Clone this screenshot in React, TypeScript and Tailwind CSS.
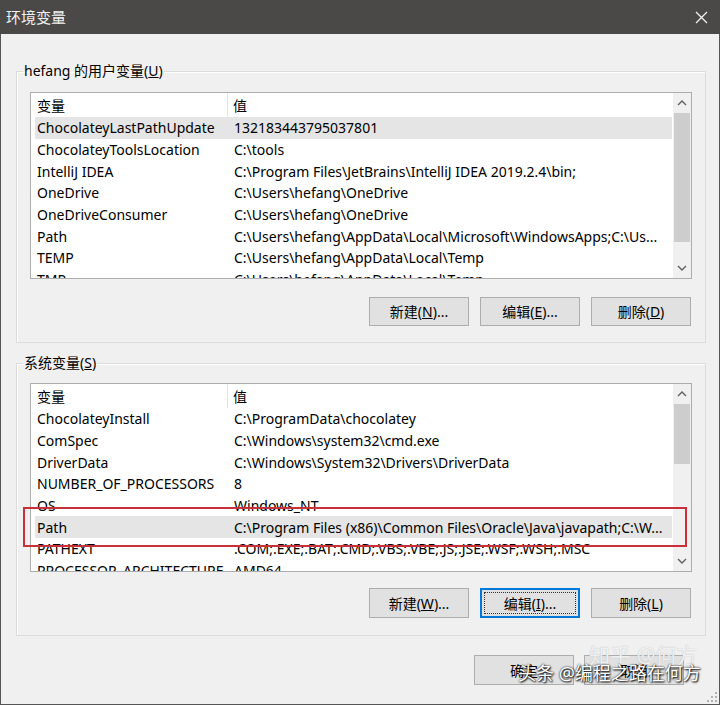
import React from 'react';

type Row = [string, string];

const userVars: Row[] = [
  ['ChocolateyLastPathUpdate', '132183443795037801'],
  ['ChocolateyToolsLocation', 'C:\\tools'],
  ['IntelliJ IDEA', 'C:\\Program Files\\JetBrains\\IntelliJ IDEA 2019.2.4\\bin;'],
  ['OneDrive', 'C:\\Users\\hefang\\OneDrive'],
  ['OneDriveConsumer', 'C:\\Users\\hefang\\OneDrive'],
  ['Path', 'C:\\Users\\hefang\\AppData\\Local\\Microsoft\\WindowsApps;C:\\Us...'],
  ['TEMP', 'C:\\Users\\hefang\\AppData\\Local\\Temp'],
  ['TMP', 'C:\\Users\\hefang\\AppData\\Local\\Temp'],
];

const systemVars: Row[] = [
  ['ChocolateyInstall', 'C:\\ProgramData\\chocolatey'],
  ['ComSpec', 'C:\\Windows\\system32\\cmd.exe'],
  ['DriverData', 'C:\\Windows\\System32\\Drivers\\DriverData'],
  ['NUMBER_OF_PROCESSORS', '8'],
  ['OS', 'Windows_NT'],
  ['Path', 'C:\\Program Files (x86)\\Common Files\\Oracle\\Java\\javapath;C:\\W...'],
  ['PATHEXT', '.COM;.EXE;.BAT;.CMD;.VBS;.VBE;.JS;.JSE;.WSF;.WSH;.MSC'],
  ['PROCESSOR_ARCHITECTURE', 'AMD64'],
];

function Chevron({ up }: { up?: boolean }) {
  return (
    <svg width="10" height="6" viewBox="0 0 10 6" className="text-[#606060]">
      <path
        d={up ? 'M1 5 L5 1 L9 5' : 'M1 1 L5 5 L9 1'}
        fill="none"
        stroke="currentColor"
        strokeWidth="1.4"
      />
    </svg>
  );
}

function VarList({
  rows,
  selected,
  thumb,
  height,
}: {
  rows: Row[];
  selected: number;
  thumb: string;
  height: string;
}) {
  return (
    <div className={`flex bg-white border border-[#adadad] overflow-hidden ${height}`}>
      <div className="flex-1 min-w-0">
        <div className="flex h-[24px] items-center">
          <div className="w-[197px] h-full pl-[6px] flex items-center border-r border-[#e5e5e5]">变量</div>
          <div className="pl-[5px]">值</div>
        </div>
        {rows.map(([k, v], i) => (
          <div
            key={i}
            className={`flex h-[21.7px] items-center ml-[4px] mr-[1px] ${i === selected ? 'bg-[#e5e5e5]' : ''}`}
          >
            <div className="w-[193px] pl-[2px] whitespace-nowrap">{k}</div>
            <div className="pl-[6px] whitespace-nowrap">{v}</div>
          </div>
        ))}
      </div>
      <div className="w-[18px] bg-[#f0f0f0] flex flex-col">
        <div className="h-[20px] flex items-center justify-center">
          <Chevron up />
        </div>
        <div className={`mx-[1px] bg-[#cdcdcd] ${thumb}`} />
        <div className="flex-1" />
        <div className="h-[20px] flex items-center justify-center">
          <Chevron />
        </div>
      </div>
    </div>
  );
}

function Btn({ children, focus }: { children: React.ReactNode; focus?: boolean }) {
  return (
    <div
      className={`relative w-[100px] h-full flex items-center justify-center bg-[#e1e1e1] border ${
        focus ? 'border-[#0078d7] shadow-[inset_0_0_0_1px_#0078d7]' : 'border-[#adadad]'
      }`}
    >
      {focus && <span className="absolute inset-[3px] border border-dotted border-[#333]" />}
      {children}
    </div>
  );
}

export default function App() {
  return (
    <div
      className="relative w-[720px] h-[705px] flex flex-col bg-[#f0f0f0] border-l border-r border-b border-[#555] text-[14px] text-black"
      style={{ fontFamily: '"Noto Sans", "Noto Sans CJK SC", sans-serif' }}
    >
      {/* title bar */}
      <div className="h-[34px] bg-[#4a4947] flex items-center justify-between pl-[6px] pr-[12px] text-[#f2f2f2] text-[15px] -mx-px">
        <span>环境变量</span>
        <svg width="13" height="13" viewBox="0 0 13 13">
          <path d="M1 1 L12 12 M12 1 L1 12" stroke="#f2f2f2" strokeWidth="1.3" />
        </svg>
      </div>

      <div className="flex flex-col pl-[15px] pr-[13px]">
        {/* user vars */}
        <fieldset className="mt-[27px] border border-[#dcdcdc] px-[13px] pb-[16px] shadow-[inset_1px_1px_0_#fff]">
          <legend className="-ml-[7px] px-[1px] leading-[20px]">
            hefang 的用户变量(<u>U</u>)
          </legend>
          <div className="mt-[11px]">
            <VarList rows={userVars} selected={0} thumb="h-[129px]" height="h-[187px]" />
          </div>
          <div className="mt-[18px] h-[29px] flex justify-end gap-[11px] mr-[1px]">
            <Btn>新建(<u>N</u>)...</Btn>
            <Btn>编辑(<u>E</u>)...</Btn>
            <Btn>删除(<u>D</u>)</Btn>
          </div>
        </fieldset>

        {/* system vars */}
        <fieldset className="mt-[10px] border border-[#dcdcdc] px-[13px] pb-[17px] shadow-[inset_1px_1px_0_#fff]">
          <legend className="-ml-[7px] px-[1px] leading-[20px]">
            系统变量(<u>S</u>)
          </legend>
          <div className="relative mt-[10px]">
            <VarList rows={systemVars} selected={5} thumb="h-[60px]" height="h-[189px]" />
            <div className="absolute left-[-7px] top-[124px] w-[664px] h-[40px] border-2 border-[#c9303a]" />
          </div>
          <div className="mt-[16px] h-[30px] flex justify-end gap-[11px] mr-[1px]">
            <Btn>新建(<u>W</u>)...</Btn>
            <Btn focus>编辑(<u>I</u>)...</Btn>
            <Btn>删除(<u>L</u>)</Btn>
          </div>
        </fieldset>

        <div className="mt-[19px] h-[30px] flex justify-end gap-[10px] mr-[22px]">
          <Btn>确定</Btn>
          <Btn>取消</Btn>
        </div>
      </div>

      {/* watermarks */}
      <div className="absolute left-[588px] top-[640px] text-[21px] text-white/80 whitespace-nowrap [text-shadow:0_0_1px_#aaa]">
        知乎 @何方
      </div>
      <div className="absolute left-[517px] top-[660px] text-[18px] text-white whitespace-nowrap [text-shadow:0_0_2px_#000,1px_1px_2px_#000]">
        头条 @编程之路在何方
      </div>

      {/* resize grip */}
      <svg className="absolute right-[2px] bottom-[2px]" width="10" height="10" viewBox="0 0 10 10">
        <g fill="#b0b0b0">
          <rect x="8" y="0" width="2" height="2" />
          <rect x="4" y="4" width="2" height="2" />
          <rect x="8" y="4" width="2" height="2" />
          <rect x="0" y="8" width="2" height="2" />
          <rect x="4" y="8" width="2" height="2" />
          <rect x="8" y="8" width="2" height="2" />
        </g>
      </svg>
    </div>
  );
}
